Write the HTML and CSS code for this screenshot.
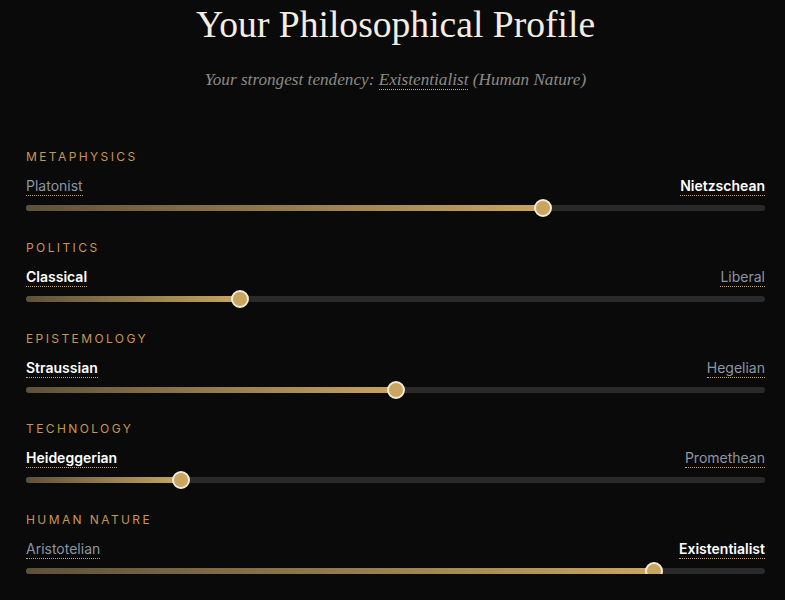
FILE: index.html
```html
<!DOCTYPE html>
<html lang="en">
<head>
<meta charset="utf-8">
<title>Your Philosophical Profile</title>
<link rel="stylesheet" href="styles.css">
</head>
<body>
<main class="profile">
  <h1 class="title">Your Philosophical Profile</h1>
  <p class="subtitle">Your strongest tendency: <span class="dotted">Existentialist</span> (Human Nature)</p>

  <section class="axes">
    <div class="axis">
      <div class="axis-name">Metaphysics</div>
      <div class="poles"><span class="pole">Platonist</span><span class="pole active">Nietzschean</span></div>
      <div class="track"><div class="fill" style="width:70%"><span class="thumb"></span></div></div>
    </div>
    <div class="axis">
      <div class="axis-name">Politics</div>
      <div class="poles"><span class="pole active">Classical</span><span class="pole">Liberal</span></div>
      <div class="track"><div class="fill" style="width:29%"><span class="thumb"></span></div></div>
    </div>
    <div class="axis">
      <div class="axis-name">Epistemology</div>
      <div class="poles"><span class="pole active">Straussian</span><span class="pole">Hegelian</span></div>
      <div class="track"><div class="fill" style="width:50%"><span class="thumb"></span></div></div>
    </div>
    <div class="axis">
      <div class="axis-name">Technology</div>
      <div class="poles"><span class="pole active">Heideggerian</span><span class="pole">Promethean</span></div>
      <div class="track"><div class="fill" style="width:21%"><span class="thumb"></span></div></div>
    </div>
    <div class="axis">
      <div class="axis-name">Human Nature</div>
      <div class="poles"><span class="pole">Aristotelian</span><span class="pole active">Existentialist</span></div>
      <div class="track"><div class="fill" style="width:85%"><span class="thumb"></span></div></div>
    </div>
  </section>
</main>
</body>
</html>
```

FILE: styles.css
```css
html, body {
  margin: 0;
  padding: 0;
  background: #0a0a0a;
}

body {
  font-family: Inter, "Noto Sans", sans-serif;
  color: #e8e2d6;
}

.profile {
  padding: 0 20px 0 26px;
}

.title {
  margin: 0;
  padding-top: 2px;
  text-align: center;
  font-family: "Liberation Serif", "DejaVu Serif", serif;
  font-weight: 400;
  font-size: 37.6px;
  line-height: 46px;
  color: #f3ede2;
}

.subtitle {
  margin: 20px 0 0;
  text-align: center;
  font-family: "Liberation Serif", "DejaVu Serif", serif;
  font-style: italic;
  font-size: 17.2px;
  line-height: 24px;
  color: #8b8a86;
}

.dotted {
  border-bottom: 1px dotted #c9a55f;
}

.axes {
  display: flex;
  flex-direction: column;
  gap: 28.8px;
  margin-top: 57px;
}

.axis-name {
  font-size: 12px;
  line-height: 16px;
  letter-spacing: 2.4px;
  text-transform: uppercase;
  color: #c8974f;
}

.poles {
  display: flex;
  justify-content: space-between;
  align-items: flex-end;
  margin-top: 12px;
  font-size: 14px;
  line-height: 17px;
}

.pole {
  color: #8d96a3;
  border-bottom: 1px dotted #c9a55f;
  padding-bottom: 1px;
}

.pole.active {
  color: #ffffff;
  font-weight: 600;
}

.track {
  margin-top: 9px;
  height: 6px;
  border-radius: 3px;
  background: #2a2a2a;
}

.fill {
  position: relative;
  height: 100%;
  border-radius: 3px;
  background: linear-gradient(90deg, #5e5139 0%, #c9a55f 100%);
}

.thumb {
  position: absolute;
  right: -9px;
  top: -6px;
  width: 14px;
  height: 14px;
  border-radius: 50%;
  background: #c9a55f;
  border: 2px solid #f2ead8;
}
```
